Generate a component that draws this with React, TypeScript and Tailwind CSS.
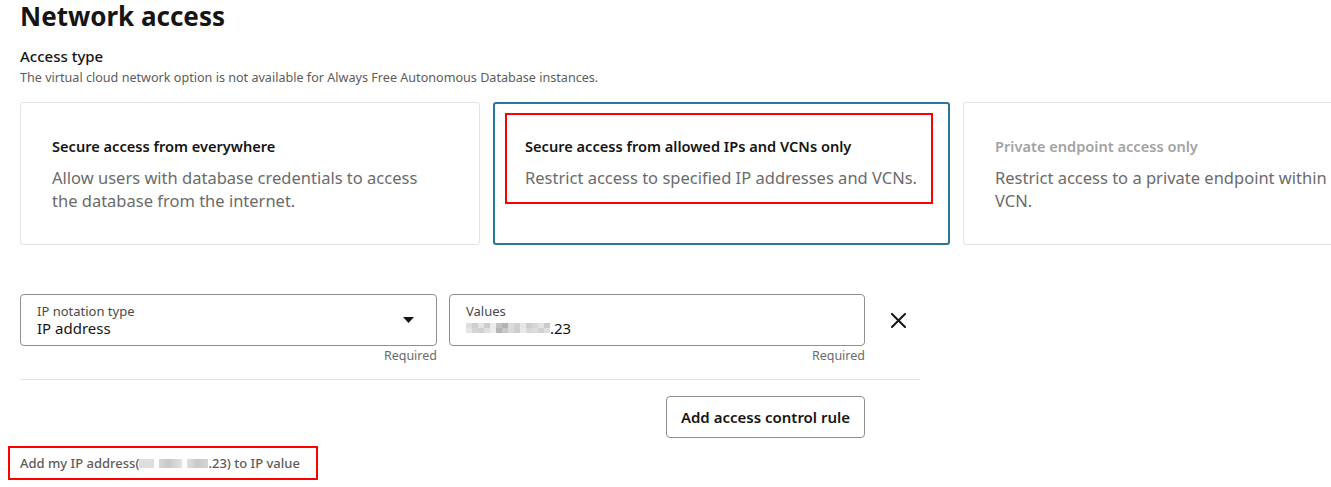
import React from "react";

const font = { fontFamily: '"Noto Sans", "Open Sans", Arial, sans-serif' };

function Blur({ cells, h = 5 }: { cells: string[][]; h?: number }) {
  // pixelated redaction, rows of grey squares
  return (
    <span className="inline-flex flex-col align-middle">
      {cells.map((row, i) => (
        <span key={i} className="flex">
          {row.map((c, j) => (
            <span key={j} className="block w-[6px]" style={{ height: h, background: c }} />
          ))}
        </span>
      ))}
    </span>
  );
}

const valueBlur = [
  ["#dedede", "#cfcfcf", "#e4e4e4", "#cbcbcb", "#ececec", "#c2c2c2", "#b3b3b3", "#dcdcdc", "#d0d0d0", "#e6e6e6", "#cdcdcd", "#d6d6d6", "#e2e2e2", "#c9c9c9"],
  ["#e6e6e6", "#d6d6d6", "#d1d1d1", "#e0e0e0", "#eeeeee", "#b5b5b5", "#c8c8c8", "#dadada", "#cecece", "#e8e8e8", "#d8d8d8", "#dcdcdc", "#d2d2d2", "#dfdfdf"],
];

function Card({
  title,
  desc,
  selected,
  disabled,
  width,
  descWidth,
}: {
  title: string;
  desc: string;
  selected?: boolean;
  disabled?: boolean;
  width: string;
  descWidth: string;
}) {
  return (
    <div
      className={
        "relative shrink-0 h-[143px] rounded-[3px] bg-white " +
        width +
        (selected
          ? " border-2 border-[#2a7797] pl-[30px] pt-[32px]"
          : " border border-[#e3e3e3] pl-[31px] pt-[33px]")
      }
    >
      <div
        className={
          "text-[14.6px] leading-[20px] font-semibold whitespace-nowrap " +
          (disabled ? "text-[#a3a3a3]" : "text-[#161513]")
        }
      >
        {title}
      </div>
      <div className={"mt-[10px] text-[16.5px] leading-[23px] text-[#6b6b6b] " + descWidth}>{desc}</div>
      {selected && (
        <div className="absolute left-[10px] top-[9px] w-[428px] h-[91px] border-2 border-[#ff0000]" />
      )}
    </div>
  );
}

export default function App() {
  return (
    <div className="w-[1331px] h-[487px] overflow-hidden bg-white pl-[20px]" style={font}>
      <h1 className="pt-[1px] text-[26px] leading-[31px] font-bold text-[#161513]">Network access</h1>
      <div className="mt-[14px] text-[15px] leading-[20px] font-medium text-[#161513]">Access type</div>
      <div className="mt-[4px] text-[12.6px] leading-[16px] text-[#5c5c5c]">
        The virtual cloud network option is not available for Always Free Autonomous Database instances.
      </div>

      <div className="mt-[16px] flex gap-[13px]">
        <Card
          width="w-[460px]"
          descWidth="w-[385px]"
          title="Secure access from everywhere"
          desc="Allow users with database credentials to access the database from the internet."
        />
        <Card
          width="w-[457px]"
          descWidth="w-[405px]"
          selected
          title="Secure access from allowed IPs and VCNs only"
          desc="Restrict access to specified IP addresses and VCNs."
        />
        <Card
          width="w-[460px]"
          descWidth="w-[360px]"
          disabled
          title="Private endpoint access only"
          desc="Restrict access to a private endpoint within a VCN."
        />
      </div>

      <div className="mt-[49px] flex items-start">
        <div className="w-[417px]">
          <div className="h-[52px] rounded-[4px] border border-[#8f8f8f] flex items-center pl-[16px] pr-[22px]">
            <div className="flex-1">
              <div className="text-[13px] leading-[15px] text-[#4a4a4a]">IP notation type</div>
              <div className="text-[15px] leading-[18px] text-[#161513]">IP address</div>
            </div>
            <svg width="11" height="6" viewBox="0 0 11 6">
              <path d="M0 0 H11 L5.5 6 Z" fill="#161513" />
            </svg>
          </div>
          <div className="mt-[2px] text-right text-[12.5px] leading-[16px] text-[#6b6b6b]">Required</div>
        </div>
        <div className="ml-[12px] w-[416px]">
          <div className="h-[52px] rounded-[4px] border border-[#8f8f8f] flex items-center pl-[16px]">
            <div>
              <div className="text-[13px] leading-[15px] text-[#4a4a4a]">Values</div>
              <div className="flex items-center text-[15px] leading-[18px] text-[#161513]">
                <Blur cells={valueBlur} />
                <span>.23</span>
              </div>
            </div>
          </div>
          <div className="mt-[2px] text-right text-[12.5px] leading-[16px] text-[#6b6b6b]">Required</div>
        </div>
        <div className="ml-[26px] mt-[19px]">
          <svg width="15" height="15" viewBox="0 0 15 15">
            <path d="M1 1 L14 14 M14 1 L1 14" stroke="#161513" strokeWidth="2" strokeLinecap="square" />
          </svg>
        </div>
      </div>

      <div className="mt-[15px] w-[900px] h-px bg-[#e4e4e4]" />

      <div className="mt-[16px] w-[845px] flex justify-end">
        <button className="h-[42px] w-[199px] rounded-[4px] border border-[#8f8f8f] bg-white text-[15px] font-semibold text-[#161513]">
          Add access control rule
        </button>
      </div>

      <div className="mt-[8px] -ml-[12px] w-[310px] h-[34px] border-2 border-[#ff0000] pl-[10px] flex items-center">
        <span className="flex items-center whitespace-nowrap text-[13px] leading-[16px] font-medium text-[#5c5c5c]">
          Add my IP address(
          <span className="inline-flex gap-[5px] items-center">
            <span className="block w-[15px] h-[9px] bg-[#dedede]" />
            <span className="block w-[23px] h-[9px] bg-[linear-gradient(90deg,#d6d6d6,#c8c8c8_40%,#e2e2e2)]" />
            <span className="block w-[21px] h-[9px] bg-[linear-gradient(90deg,#dedede,#c9c9c9_50%,#d4d4d4)]" />
          </span>
          .23) to IP value
        </span>
      </div>
    </div>
  );
}
